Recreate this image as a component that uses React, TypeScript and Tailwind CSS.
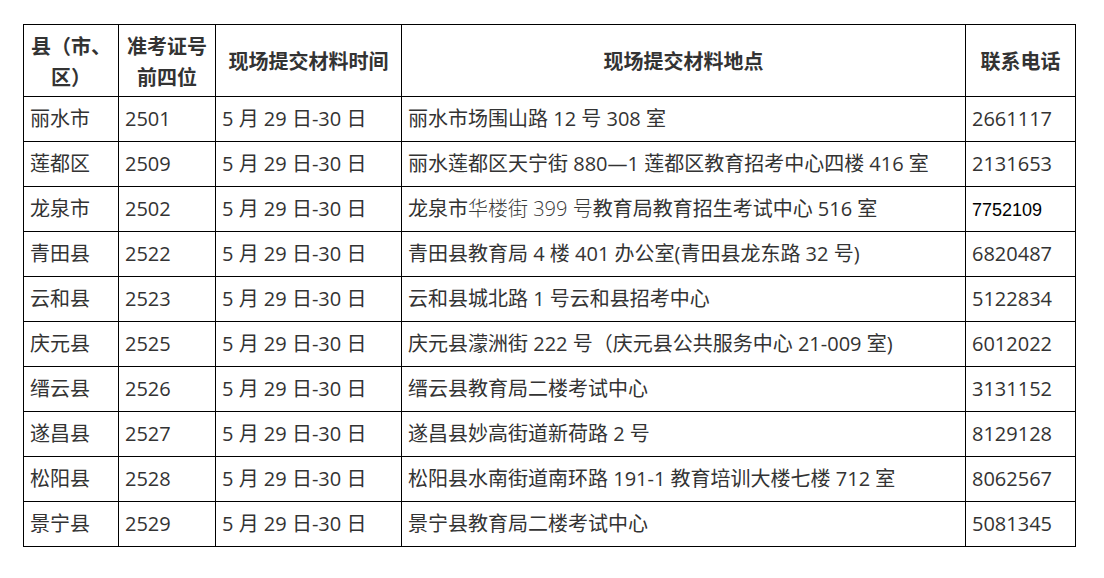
const rows: [string, string, React.ReactNode, React.ReactNode][] = [
  ["丽水市", "2501", "丽水市场围山路 12 号 308 室", "2661117"],
  ["莲都区", "2509", "丽水莲都区天宁街 880—1 莲都区教育招考中心四楼 416 室", "2131653"],
  [
    "龙泉市",
    "2502",
    <>
      龙泉市<span className="text-[#3a3a3a] font-light">华楼街 399 号</span>教育局教育招生考试中心 516 室
    </>,
    <span className="font-['Liberation_Sans',sans-serif] text-[18px] text-black">7752109</span>,
  ],
  ["青田县", "2522", "青田县教育局 4 楼 401 办公室(青田县龙东路 32 号)", "6820487"],
  ["云和县", "2523", "云和县城北路 1 号云和县招考中心", "5122834"],
  ["庆元县", "2525", "庆元县濛洲街 222 号（庆元县公共服务中心 21-009 室)", "6012022"],
  ["缙云县", "2526", "缙云县教育局二楼考试中心", "3131152"],
  ["遂昌县", "2527", "遂昌县妙高街道新荷路 2 号", "8129128"],
  ["松阳县", "2528", "松阳县水南街道南环路 191-1 教育培训大楼七楼 712 室", "8062567"],
  ["景宁县", "2529", "景宁县教育局二楼考试中心", "5081345"],
];

const th = "border border-black font-bold text-center align-middle px-[6px] leading-[31px] font-['Noto_Sans_CJK_SC',sans-serif]";
const td = "border border-black px-[6px] h-[45px] align-middle whitespace-nowrap";

export default function App() {
  return (
    <div className="w-[1104px] h-[578px] bg-white pt-[24px] pl-[23px] font-['Open_Sans','Noto_Sans_CJK_SC',sans-serif] text-[20px] text-[#333]">
      <table className="table-fixed border-collapse w-[1052px]">
        <colgroup>
          <col className="w-[95px]" />
          <col className="w-[97px]" />
          <col className="w-[186px]" />
          <col className="w-[564px]" />
          <col className="w-[110px]" />
        </colgroup>
        <thead>
          <tr className="h-[72px]">
            <th className={th}>
              县（市、
              <br />
              区）
            </th>
            <th className={th}>
              准考证号
              <br />
              前四位
            </th>
            <th className={th}>现场提交材料时间</th>
            <th className={th}>现场提交材料地点</th>
            <th className={th}>联系电话</th>
          </tr>
        </thead>
        <tbody>
          {rows.map(([county, code, place, phone]) => (
            <tr key={code}>
              <td className={td}>{county}</td>
              <td className={td}>{code}</td>
              <td className={td}>5 月 29 日-30 日</td>
              <td className={td}>{place}</td>
              <td className={td}>{phone}</td>
            </tr>
          ))}
        </tbody>
      </table>
    </div>
  );
}
